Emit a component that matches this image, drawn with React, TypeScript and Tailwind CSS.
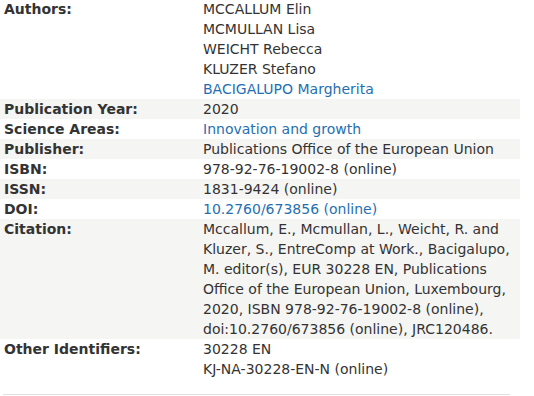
import React from 'react';

type Val = { text: string; link?: boolean };

const rows: { label: string; values: Val[] }[] = [
  {
    label: 'Authors:',
    values: [
      { text: 'MCCALLUM Elin' },
      { text: 'MCMULLAN Lisa' },
      { text: 'WEICHT Rebecca' },
      { text: 'KLUZER Stefano' },
      { text: 'BACIGALUPO Margherita', link: true },
    ],
  },
  { label: 'Publication Year:', values: [{ text: '2020' }] },
  { label: 'Science Areas:', values: [{ text: 'Innovation and growth', link: true }] },
  { label: 'Publisher:', values: [{ text: 'Publications Office of the European Union' }] },
  { label: 'ISBN:', values: [{ text: '978-92-76-19002-8 (online)' }] },
  { label: 'ISSN:', values: [{ text: '1831-9424 (online)' }] },
  { label: 'DOI:', values: [{ text: '10.2760/673856 (online)', link: true }] },
  {
    label: 'Citation:',
    values: [
      { text: 'Mccallum, E., Mcmullan, L., Weicht, R. and' },
      { text: 'Kluzer, S., EntreComp at Work., Bacigalupo,' },
      { text: 'M. editor(s), EUR 30228 EN, Publications' },
      { text: 'Office of the European Union, Luxembourg,' },
      { text: '2020, ISBN 978-92-76-19002-8 (online),' },
      { text: 'doi:10.2760/673856 (online), JRC120486.' },
    ],
  },
  { label: 'Other Identifiers:', values: [{ text: '30228 EN' }, { text: 'KJ-NA-30228-EN-N (online)' }] },
];

export default function App() {
  return (
    <div className="w-[534px] h-[396px] bg-white text-[14px] leading-[20px] text-[#333333] font-['DejaVu_Sans',Verdana,sans-serif]">
      <div className="w-[520px] -mt-px">
        {rows.map((r, i) => (
          <div key={r.label} className={`flex ${i % 2 === 1 ? 'bg-[#f5f5f3]' : ''}`}>
            <div className="w-[203px] pl-[4px] font-bold">{r.label}</div>
            <div className="flex-1">
              {r.values.map(v => (
                <div key={v.text} className={v.link ? 'text-[#1f6fb2]' : ''}>{v.text}</div>
              ))}
            </div>
          </div>
        ))}
      </div>
      <div className="mt-[15px] ml-[3px] w-[507px] h-px bg-[#e0e0e0]" />
    </div>
  );
}
